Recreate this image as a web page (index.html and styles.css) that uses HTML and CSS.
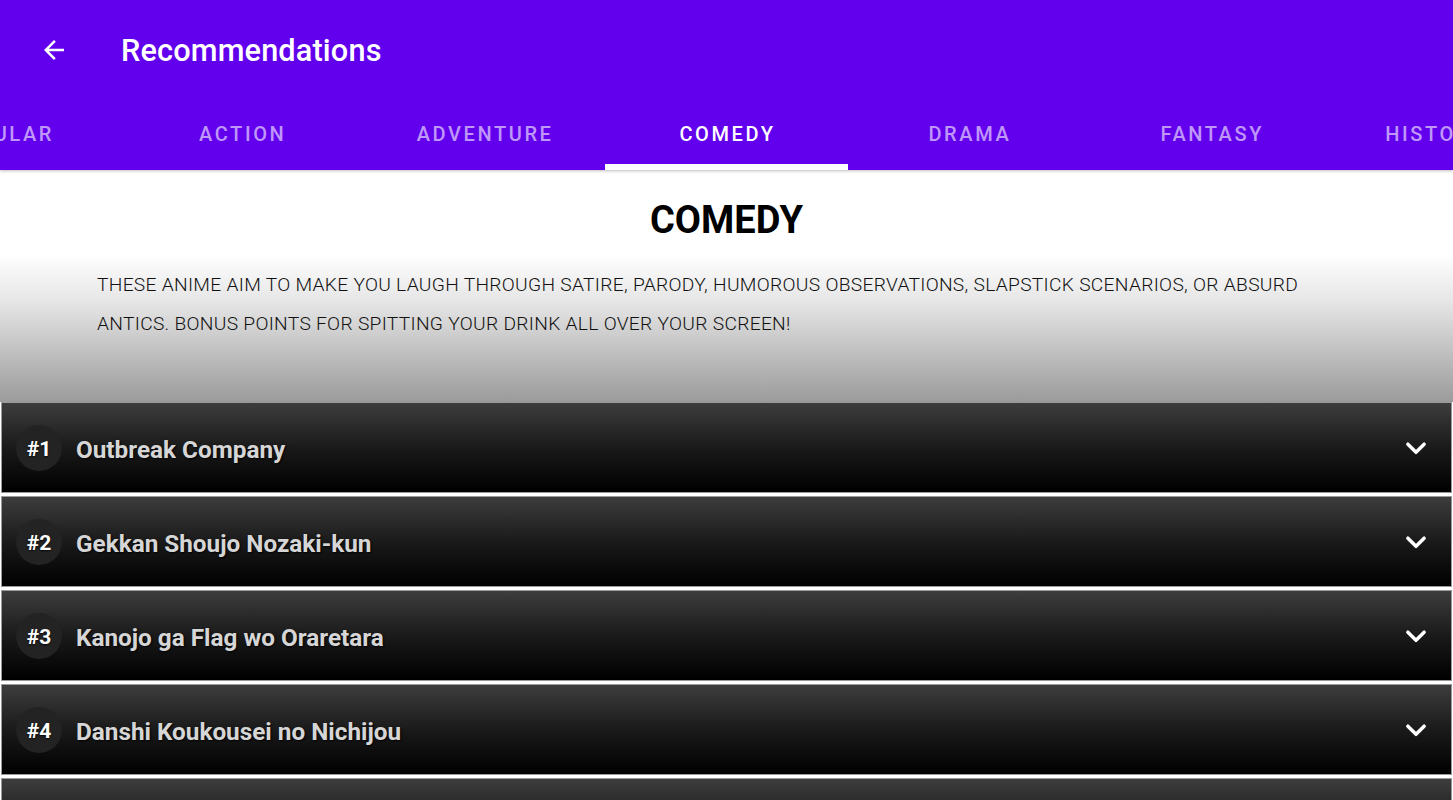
FILE: index.html
```html
<!DOCTYPE html>
<html lang="en">
<head>
    <meta charset="UTF-8">
    <meta name="viewport" content="width=device-width, initial-scale=1.0">
    <title>Recommendations</title>
    <link rel="stylesheet" href="styles.css">
</head>
<body>
    <div class="appbar">
        <div class="toolbar">
            <button class="back-btn" aria-label="Back">
                <svg width="30" height="30" viewBox="0 0 24 24"><path d="M20 11H7.83l5.59-5.59L12 4l-8 8 8 8 1.41-1.41L7.83 13H20v-2z" fill="#fff"/></svg>
            </button>
            <h1 class="title">Recommendations</h1>
        </div>
        <div class="tabs">
            <div class="tab-strip">
                <div class="tab">POPULAR</div>
                <div class="tab">ACTION</div>
                <div class="tab">ADVENTURE</div>
                <div class="tab active">COMEDY</div>
                <div class="tab">DRAMA</div>
                <div class="tab">FANTASY</div>
                <div class="tab">HISTORICAL</div>
            </div>
        </div>
    </div>

    <div class="intro">
        <h2 class="genre">COMEDY</h2>
        <p class="desc">These anime aim to make you laugh through satire, parody, humorous observations, slapstick scenarios, or absurd antics. Bonus points for spitting your drink all over your screen!</p>
    </div>

    <div class="list">
        <div class="card">
            <span class="rank">#1</span>
            <span class="name">Outbreak Company</span>
            <svg class="chev" width="26" height="26" viewBox="0 0 24 24"><path d="M4.5 8.5l7.5 7.5 7.5-7.5" fill="none" stroke="#fff" stroke-width="3.2" stroke-linecap="round" stroke-linejoin="round"/></svg>
        </div>
        <div class="card">
            <span class="rank">#2</span>
            <span class="name">Gekkan Shoujo Nozaki-kun</span>
            <svg class="chev" width="26" height="26" viewBox="0 0 24 24"><path d="M4.5 8.5l7.5 7.5 7.5-7.5" fill="none" stroke="#fff" stroke-width="3.2" stroke-linecap="round" stroke-linejoin="round"/></svg>
        </div>
        <div class="card">
            <span class="rank">#3</span>
            <span class="name">Kanojo ga Flag wo Oraretara</span>
            <svg class="chev" width="26" height="26" viewBox="0 0 24 24"><path d="M4.5 8.5l7.5 7.5 7.5-7.5" fill="none" stroke="#fff" stroke-width="3.2" stroke-linecap="round" stroke-linejoin="round"/></svg>
        </div>
        <div class="card">
            <span class="rank">#4</span>
            <span class="name">Danshi Koukousei no Nichijou</span>
            <svg class="chev" width="26" height="26" viewBox="0 0 24 24"><path d="M4.5 8.5l7.5 7.5 7.5-7.5" fill="none" stroke="#fff" stroke-width="3.2" stroke-linecap="round" stroke-linejoin="round"/></svg>
        </div>
        <div class="card">
            <span class="rank">#5</span>
            <span class="name">Saiki Kusuo no Psi-nan</span>
            <svg class="chev" width="26" height="26" viewBox="0 0 24 24"><path d="M4.5 8.5l7.5 7.5 7.5-7.5" fill="none" stroke="#fff" stroke-width="3.2" stroke-linecap="round" stroke-linejoin="round"/></svg>
        </div>
    </div>
</body>
</html>
```

FILE: styles.css
```css
* { margin: 0; padding: 0; box-sizing: border-box; }
html, body { height: 100%; overflow: hidden; }
body {
    font-family: Roboto, 'Noto Sans', sans-serif;
    background: #fff;
}
.appbar {
    background: #6200ee;
    color: #fff;
    box-shadow: 0 1px 3px rgba(0, 0, 0, 0.25);
    position: relative;
    z-index: 1;
}
.toolbar {
    height: 100px;
    display: flex;
    align-items: center;
    padding-left: 30px;
}
.back-btn {
    width: 48px;
    height: 48px;
    border: none;
    background: none;
    display: flex;
    align-items: center;
    justify-content: center;
}
.title {
    font-size: 30.7px;
    font-weight: 500;
    margin-left: 43px;
    letter-spacing: 0.15px;
}
.tabs {
    height: 70px;
    overflow: hidden;
}
.tab-strip {
    display: flex;
    height: 100%;
    margin-left: -121.9px;
}
.tab {
    flex: 0 0 242.4px;
    display: flex;
    align-items: center;
    justify-content: center;
    font-size: 20px;
    font-weight: 500;
    letter-spacing: 2.6px;
    color: rgba(255, 255, 255, 0.6);
    border-bottom: 6px solid transparent;
    padding-top: 4px;
    padding-left: 2px;
    white-space: nowrap;
}
.tab.active {
    color: #fff;
    border-bottom-color: #fff;
}
.intro {
    height: 232px;
    background: linear-gradient(to bottom, #fff 0%, #fff 36%, #e4e4e4 58%, #9c9b9b 100%);
    padding-top: 30px;
}
.genre {
    text-align: center;
    font-size: 38px;
    font-weight: 700;
    color: #000;
    line-height: 40px;
}
.desc {
    text-transform: uppercase;
    font-size: 19.2px;
    font-weight: 300;
    color: #111;
    line-height: 39px;
    padding: 25px 97px 0;
    letter-spacing: 0.3px;
}
.list {
    padding: 0 1px;
    display: flex;
    flex-direction: column;
    gap: 3px;
}
.card {
    height: 91px;
    border: 1px solid #9a9a9a;
    background: linear-gradient(to bottom, #3d3d3d 0%, #1a1a1a 50%, #000 100%);
    display: flex;
    align-items: center;
    padding: 0 22px 0 14px;
}
.rank {
    width: 46px;
    height: 46px;
    border-radius: 50%;
    background: #232323;
    color: #fff;
    font-weight: 700;
    font-size: 21px;
    display: flex;
    align-items: center;
    justify-content: center;
    padding-top: 2px;
    text-shadow: 0 1px 2px rgba(0, 0, 0, 0.8);
}
.name {
    margin-left: 14px;
    font-size: 24.3px;
    font-weight: 700;
    color: #d6d6d6;
    text-shadow: 1px 1px 2px rgba(0, 0, 0, 0.9);
    flex: 1;
    padding-top: 3px;
}
.chev { flex: 0 0 auto; }
```
